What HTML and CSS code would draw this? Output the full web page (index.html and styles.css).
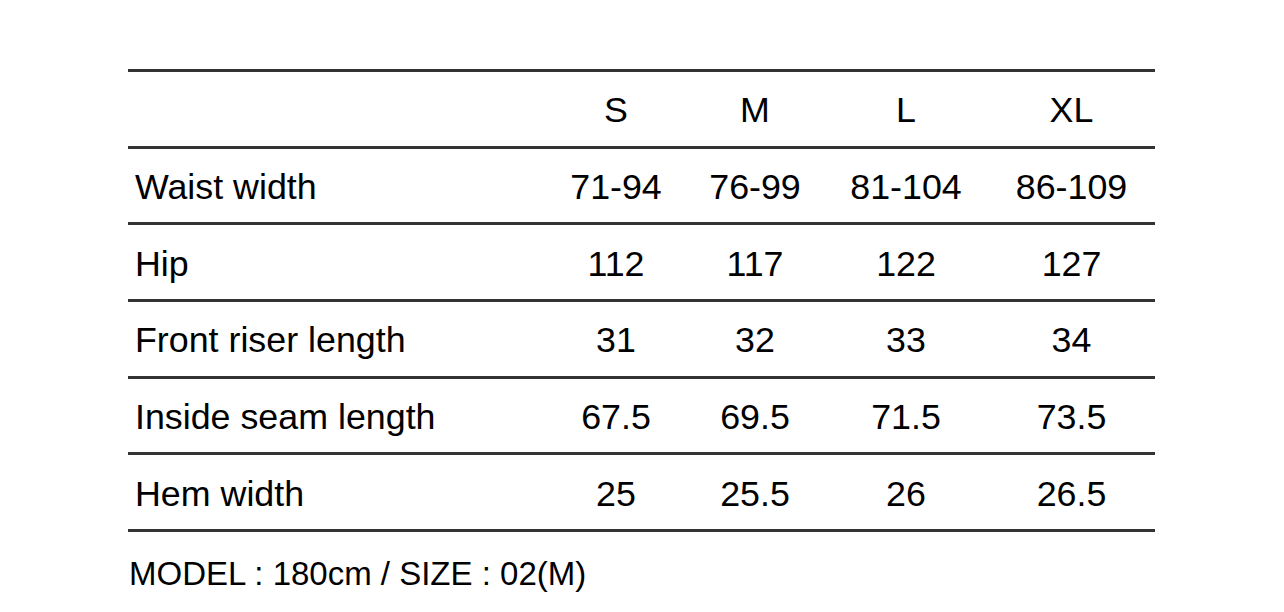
FILE: index.html
```html
<!DOCTYPE html>
<html lang="en">
<head>
<meta charset="utf-8">
<title>Size chart</title>
<link rel="stylesheet" href="styles.css">
</head>
<body>
<div class="page">
  <table class="size-table">
    <colgroup>
      <col class="c-label">
      <col class="c-s">
      <col class="c-m">
      <col class="c-l">
      <col class="c-xl">
    </colgroup>
    <thead>
      <tr><th class="label"></th><th>S</th><th>M</th><th>L</th><th>XL</th></tr>
    </thead>
    <tbody>
      <tr><td class="label">Waist width</td><td>71-94</td><td>76-99</td><td>81-104</td><td>86-109</td></tr>
      <tr><td class="label">Hip</td><td>112</td><td>117</td><td>122</td><td>127</td></tr>
      <tr><td class="label">Front riser length</td><td>31</td><td>32</td><td>33</td><td>34</td></tr>
      <tr><td class="label">Inside seam length</td><td>67.5</td><td>69.5</td><td>71.5</td><td>73.5</td></tr>
      <tr><td class="label">Hem width</td><td>25</td><td>25.5</td><td>26</td><td>26.5</td></tr>
    </tbody>
  </table>
  <p class="model">MODEL : 180cm / SIZE : 02(M)</p>
</div>
</body>
</html>
```
FILE: styles.css
```css
html, body {
  margin: 0;
  padding: 0;
  background: #fff;
}
.page {
  padding: 69px 0 0 128px;
  font-family: "Liberation Sans", Arial, Helvetica, sans-serif;
  color: #000;
}
.size-table {
  width: 1027px;
  border-collapse: collapse;
  table-layout: fixed;
  border-top: 3px solid #333;
}
.c-label { width: 418px; }
.c-s { width: 140px; }
.c-m { width: 138px; }
.c-l { width: 164px; }
.c-xl { width: 167px; }
.size-table tr {
  border-bottom: 3px solid #333;
}
.size-table th,
.size-table td {
  height: 69.67px;
  padding: 4px 0 0;
  font-size: 35.8px;
  font-weight: normal;
  text-align: center;
  vertical-align: middle;
  white-space: nowrap;
}
.size-table .label {
  text-align: left;
  padding-left: 7px;
}
.model {
  margin: 22px 0 0 1px;
  font-size: 33px;
  line-height: 40px;
}
```
